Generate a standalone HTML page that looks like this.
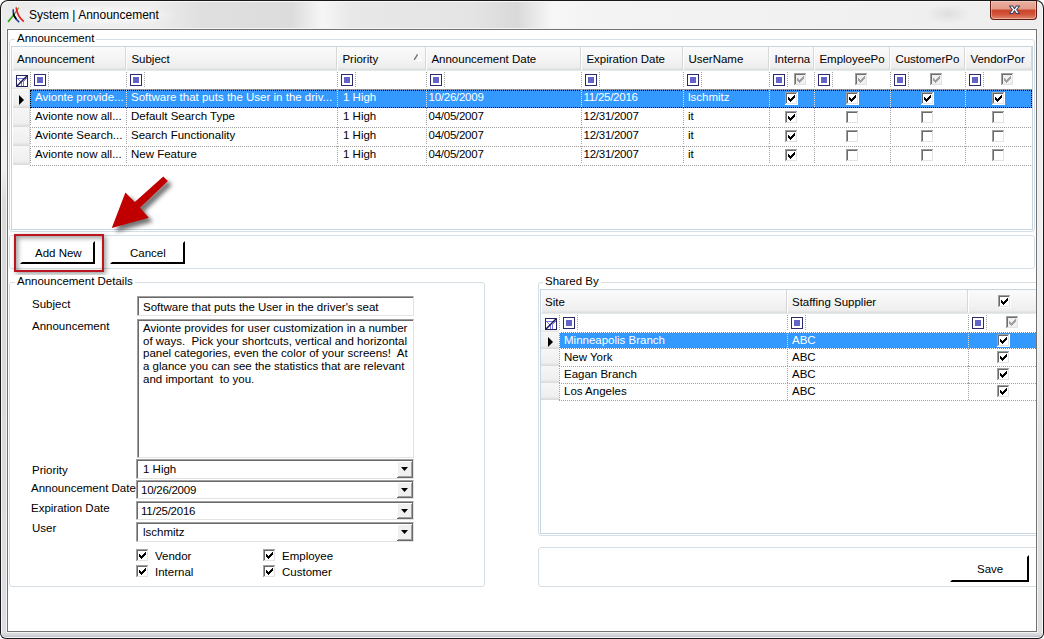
<!DOCTYPE html><html><head><meta charset="utf-8"><title>System | Announcement</title><style>
*{margin:0;padding:0;box-sizing:border-box}
html,body{width:1044px;height:639px;overflow:hidden;background:#fff}
body{position:relative;font-family:"Liberation Sans",sans-serif}
div,span,svg{position:absolute}
.t{font-size:11.5px;line-height:13px;white-space:nowrap;color:#000}
.hd{height:1px;background-image:linear-gradient(to right,#a0a0a0 50%,transparent 50%);background-size:2px 1px}
.vd{width:1px;background-image:linear-gradient(to bottom,#a0a0a0 50%,transparent 50%);background-size:1px 2px}
.fi{width:12px;height:12px;border:1px solid #2b2a6b;background:#fff}
.fi i{position:absolute;left:2px;top:2px;width:6px;height:6px;background:#6464c8}
.hc{background:linear-gradient(#fbfbfb,#f3f3f3 60%,#eeeeee 88%,#dcdcdc);border-right:1px solid #d7d7d7;box-shadow:inset 1px 0 0 #fff}
.gb{border:1px solid #d5dfe5;border-radius:3px}

.cb{border-top:1px solid #a0a0a0;border-left:1px solid #a0a0a0;border-right:1px solid #e3e3e3;border-bottom:1px solid #e3e3e3;box-shadow:inset 1px 1px 0 #696969;background:#fff}
.btn{border-right:2px solid #000;border-bottom:2px solid #000;border-top:2px solid transparent;border-left:2px solid transparent;background:#fff}
</style></head><body><div style="left:0px;top:0px;width:1044px;height:639px;background:#181818;border-radius:8px 8px 6px 6px"></div>
<div style="left:1px;top:1px;width:1042px;height:637px;background:#f8f8f8;border-radius:7px 7px 5px 5px"></div>
<div style="left:2px;top:2px;width:1040px;height:635px;background:linear-gradient(90deg,#ebebeb 0px,#eeeeee 150px,#dfdfdf 200px,#dcdcdc 290px,#f6f6f6 320px,#e8e8e8 350px,#e4e4e4 470px,#d9d9d9 515px,#f7f7f7 550px,#f3f3f3 590px,#f1f1f1 800px,#eeeeee 1040px);border-radius:6px 6px 4px 4px"></div>
<div style="left:925px;top:4px;width:45px;height:20px;background:radial-gradient(ellipse at center,rgba(0,0,0,.07),rgba(0,0,0,0) 70%)"></div>
<div style="left:2px;top:28px;width:4px;height:608px;background:linear-gradient(#ececec 0px,#f0f0f0 140px,#dadada 175px,#dadada 380px,#dcdee2 608px)"></div>
<div style="left:1038px;top:28px;width:4px;height:608px;background:linear-gradient(#eeeeee 0px,#f0f0f0 300px,#e0e0dc 420px,#dedfe0 608px)"></div>
<div style="left:2px;top:633px;width:1040px;height:4px;background:linear-gradient(#dcdce0,#d4d6da 50%,#bcc0cc);border-radius:0 0 4px 4px"></div>
<div style="left:6px;top:28px;width:1032px;height:605px;background:#f4f4f4"></div>
<div style="left:7px;top:29px;width:1030px;height:603px;background:#737373"></div>
<div style="left:8px;top:30px;width:1028px;height:601px;background:#fff"></div>
<div style="left:10px;top:4px;width:170px;height:22px;background:radial-gradient(ellipse at center,rgba(255,255,255,.9),rgba(255,255,255,0) 70%)"></div>
<svg class="a" style="left:0;top:0" width="30" height="28" viewBox="0 0 30 28"><path d="M7.3 21.2L8.8 22.6L13.6 16.2L19.2 7.9L18.6 7.2L13 14.6Z" fill="#3ca81e"/><path d="M13.2 9.2C12.8 13.5 15 18.5 19.2 22.2" stroke="#1a3596" stroke-width="1.5" fill="none"/><path d="M13.3 13.5C13.9 15.6 14.9 17.4 16.2 18.9" stroke="#000" stroke-width="1.6" fill="none"/><path d="M16.2 7.4C16.8 13 19.5 18.2 23.8 21.6" stroke="#e31b1b" stroke-width="1.6" fill="none"/></svg>
<span class="t" style="left:29px;top:8px;font-size:12px;line-height:14px;color:#000">System | Announcement</span>
<div style="left:990px;top:1px;width:47px;height:19px;border:1px solid #5d1b12;border-top:none;border-radius:0 0 4px 4px;background:linear-gradient(#eab0a2 0%,#e39a88 45%,#c9432a 50%,#d2553a 75%,#e08a72 100%);box-shadow:inset 0 0 0 1px rgba(255,220,210,.45)"></div>
<svg class="a" style="left:1004px;top:0" width="20" height="20" viewBox="1004 0 20 20"><polygon points="1009.5,6 1012.7,6 1014.5,8.7 1016.3,6 1019.5,6 1016.7,9.75 1019.5,13.5 1016.3,13.5 1014.5,10.8 1012.7,13.5 1009.5,13.5 1012.3,9.75" fill="#fff" stroke="#3c4260" stroke-width="1.1" stroke-linejoin="round"/></svg>
<div style="left:0;top:0;width:1044px;height:639px;clip-path:inset(30px 8px 8px 8px)">
<div class="gb" style="left:9px;top:39px;width:1026px;height:193px"></div>
<span class="t" style="left:15px;top:32px;padding:0 2px;background:#fff">Announcement</span>
<div style="left:11px;top:46px;width:1022px;height:184px;border:1px solid #c8d4de;background:#fff"></div>
<div class="hc" style="left:12px;top:47px;width:114px;height:23px;overflow:hidden"><span class="t" style="left:5px;top:6px">Announcement</span></div>
<div class="hc" style="left:126px;top:47px;width:211px;height:23px;overflow:hidden"><span class="t" style="left:5.4px;top:6px">Subject</span></div>
<div class="hc" style="left:337px;top:47px;width:89px;height:23px;overflow:hidden"><span class="t" style="left:5.4px;top:6px">Priority</span></div>
<div class="hc" style="left:426px;top:47px;width:155px;height:23px;overflow:hidden"><span class="t" style="left:5.4px;top:6px">Announcement Date</span></div>
<div class="hc" style="left:581px;top:47px;width:102px;height:23px;overflow:hidden"><span class="t" style="left:5.4px;top:6px">Expiration Date</span></div>
<div class="hc" style="left:683px;top:47px;width:86px;height:23px;overflow:hidden"><span class="t" style="left:5.4px;top:6px">UserName</span></div>
<div class="hc" style="left:769px;top:47px;width:45px;height:23px;overflow:hidden"><span class="t" style="left:5.4px;top:6px">Interna</span></div>
<div class="hc" style="left:814px;top:47px;width:76px;height:23px;overflow:hidden"><span class="t" style="left:5.4px;top:6px">EmployeePo</span></div>
<div class="hc" style="left:890px;top:47px;width:75px;height:23px;overflow:hidden"><span class="t" style="left:5.4px;top:6px">CustomerPo</span></div>
<div class="hc" style="left:965px;top:47px;width:67px;height:23px;overflow:hidden"><span class="t" style="left:5.4px;top:6px">VendorPor</span></div>
<div style="left:12px;top:70px;width:1020px;height:1px;background:#e2eaec"></div>
<svg class="a" style="left:412px;top:52px" width="12" height="10" viewBox="0 0 12 10"><path d="M5.5 1.5L9.5 8.5H2" stroke="#fff" fill="none" stroke-width="1.2"/><path d="M2.2 7.8L5.6 2.4" stroke="#6e6e6e" stroke-width="1.3"/></svg>
<div style="left:12px;top:71px;width:18px;height:18px;background:linear-gradient(#fdfdfd,#f6f6f6 85%,#e4e4e4)"></div>
<svg class="a" style="left:16px;top:75px" width="12" height="12" viewBox="0 0 12 12"><rect x="0" y="0" width="12" height="12" fill="#fff"/><rect x="1" y="3" width="10" height="1" fill="#7676e6"/><rect x="2" y="4" width="1" height="1" fill="#7676e6"/><rect x="3" y="5" width="1" height="1" fill="#7676e6"/><rect x="4" y="6" width="1" height="1" fill="#7676e6"/><rect x="9" y="4" width="1" height="1" fill="#7676e6"/><rect x="8" y="5" width="1" height="1" fill="#7676e6"/><rect x="7" y="6" width="1" height="1" fill="#7676e6"/><rect x="5" y="7" width="1" height="4" fill="#7676e6"/><rect x="7" y="7" width="1" height="4" fill="#7676e6"/><rect x="0.5" y="0.5" width="11" height="11" fill="none" stroke="#24235f"/><path d="M0.8 11.2L11.2 0.8" stroke="#1c1b50" stroke-width="1.5"/></svg>
<div class="vd" style="left:30px;top:72px;height:15px"></div>
<div class="vd" style="left:48px;top:72px;height:15px"></div>
<div class="fi" style="left:34px;top:74px"><i></i></div>
<div class="vd" style="left:126px;top:72px;height:15px"></div>
<div class="vd" style="left:144px;top:72px;height:15px"></div>
<div class="fi" style="left:130px;top:74px"><i></i></div>
<div class="vd" style="left:337px;top:72px;height:15px"></div>
<div class="vd" style="left:355px;top:72px;height:15px"></div>
<div class="fi" style="left:341px;top:74px"><i></i></div>
<div class="vd" style="left:426px;top:72px;height:15px"></div>
<div class="vd" style="left:444px;top:72px;height:15px"></div>
<div class="fi" style="left:430px;top:74px"><i></i></div>
<div class="vd" style="left:581px;top:72px;height:15px"></div>
<div class="vd" style="left:599px;top:72px;height:15px"></div>
<div class="fi" style="left:585px;top:74px"><i></i></div>
<div class="vd" style="left:683px;top:72px;height:15px"></div>
<div class="vd" style="left:701px;top:72px;height:15px"></div>
<div class="fi" style="left:687px;top:74px"><i></i></div>
<div class="vd" style="left:769px;top:72px;height:15px"></div>
<div class="vd" style="left:787px;top:72px;height:15px"></div>
<div class="fi" style="left:773px;top:74px"><i></i></div>
<div class="vd" style="left:814px;top:72px;height:15px"></div>
<div class="vd" style="left:832px;top:72px;height:15px"></div>
<div class="fi" style="left:818px;top:74px"><i></i></div>
<div class="vd" style="left:890px;top:72px;height:15px"></div>
<div class="vd" style="left:908px;top:72px;height:15px"></div>
<div class="fi" style="left:894px;top:74px"><i></i></div>
<div class="vd" style="left:965px;top:72px;height:15px"></div>
<div class="vd" style="left:983px;top:72px;height:15px"></div>
<div class="fi" style="left:969px;top:74px"><i></i></div>
<svg class="a" style="left:794px;top:73px" width="13" height="13" viewBox="0 0 13 13" shape-rendering="crispEdges"><rect x="0" y="0" width="13" height="13" fill="#fff"/><rect x="0" y="0" width="12" height="1" fill="#a0a0a0"/><rect x="0" y="0" width="1" height="12" fill="#a0a0a0"/><rect x="1" y="1" width="10" height="1" fill="#6e6e6e"/><rect x="1" y="1" width="1" height="10" fill="#6e6e6e"/><rect x="1" y="11" width="11" height="1" fill="#e3e3e3"/><rect x="11" y="1" width="1" height="11" fill="#e3e3e3"/><rect x="2" y="2" width="9" height="9" fill="#f0f0f0"/><rect x="9" y="3" width="1" height="1" fill="#a0a0a0"/><rect x="8" y="4" width="1" height="1" fill="#a0a0a0"/><rect x="9" y="4" width="1" height="1" fill="#a0a0a0"/><rect x="3" y="5" width="1" height="1" fill="#a0a0a0"/><rect x="7" y="5" width="1" height="1" fill="#a0a0a0"/><rect x="8" y="5" width="1" height="1" fill="#a0a0a0"/><rect x="9" y="5" width="1" height="1" fill="#a0a0a0"/><rect x="3" y="6" width="1" height="1" fill="#a0a0a0"/><rect x="4" y="6" width="1" height="1" fill="#a0a0a0"/><rect x="6" y="6" width="1" height="1" fill="#a0a0a0"/><rect x="7" y="6" width="1" height="1" fill="#a0a0a0"/><rect x="8" y="6" width="1" height="1" fill="#a0a0a0"/><rect x="3" y="7" width="1" height="1" fill="#a0a0a0"/><rect x="4" y="7" width="1" height="1" fill="#a0a0a0"/><rect x="5" y="7" width="1" height="1" fill="#a0a0a0"/><rect x="6" y="7" width="1" height="1" fill="#a0a0a0"/><rect x="7" y="7" width="1" height="1" fill="#a0a0a0"/><rect x="4" y="8" width="1" height="1" fill="#a0a0a0"/><rect x="5" y="8" width="1" height="1" fill="#a0a0a0"/><rect x="6" y="8" width="1" height="1" fill="#a0a0a0"/><rect x="5" y="9" width="1" height="1" fill="#a0a0a0"/></svg>
<svg class="a" style="left:855px;top:73px" width="13" height="13" viewBox="0 0 13 13" shape-rendering="crispEdges"><rect x="0" y="0" width="13" height="13" fill="#fff"/><rect x="0" y="0" width="12" height="1" fill="#a0a0a0"/><rect x="0" y="0" width="1" height="12" fill="#a0a0a0"/><rect x="1" y="1" width="10" height="1" fill="#6e6e6e"/><rect x="1" y="1" width="1" height="10" fill="#6e6e6e"/><rect x="1" y="11" width="11" height="1" fill="#e3e3e3"/><rect x="11" y="1" width="1" height="11" fill="#e3e3e3"/><rect x="2" y="2" width="9" height="9" fill="#f0f0f0"/><rect x="9" y="3" width="1" height="1" fill="#a0a0a0"/><rect x="8" y="4" width="1" height="1" fill="#a0a0a0"/><rect x="9" y="4" width="1" height="1" fill="#a0a0a0"/><rect x="3" y="5" width="1" height="1" fill="#a0a0a0"/><rect x="7" y="5" width="1" height="1" fill="#a0a0a0"/><rect x="8" y="5" width="1" height="1" fill="#a0a0a0"/><rect x="9" y="5" width="1" height="1" fill="#a0a0a0"/><rect x="3" y="6" width="1" height="1" fill="#a0a0a0"/><rect x="4" y="6" width="1" height="1" fill="#a0a0a0"/><rect x="6" y="6" width="1" height="1" fill="#a0a0a0"/><rect x="7" y="6" width="1" height="1" fill="#a0a0a0"/><rect x="8" y="6" width="1" height="1" fill="#a0a0a0"/><rect x="3" y="7" width="1" height="1" fill="#a0a0a0"/><rect x="4" y="7" width="1" height="1" fill="#a0a0a0"/><rect x="5" y="7" width="1" height="1" fill="#a0a0a0"/><rect x="6" y="7" width="1" height="1" fill="#a0a0a0"/><rect x="7" y="7" width="1" height="1" fill="#a0a0a0"/><rect x="4" y="8" width="1" height="1" fill="#a0a0a0"/><rect x="5" y="8" width="1" height="1" fill="#a0a0a0"/><rect x="6" y="8" width="1" height="1" fill="#a0a0a0"/><rect x="5" y="9" width="1" height="1" fill="#a0a0a0"/></svg>
<svg class="a" style="left:930px;top:73px" width="13" height="13" viewBox="0 0 13 13" shape-rendering="crispEdges"><rect x="0" y="0" width="13" height="13" fill="#fff"/><rect x="0" y="0" width="12" height="1" fill="#a0a0a0"/><rect x="0" y="0" width="1" height="12" fill="#a0a0a0"/><rect x="1" y="1" width="10" height="1" fill="#6e6e6e"/><rect x="1" y="1" width="1" height="10" fill="#6e6e6e"/><rect x="1" y="11" width="11" height="1" fill="#e3e3e3"/><rect x="11" y="1" width="1" height="11" fill="#e3e3e3"/><rect x="2" y="2" width="9" height="9" fill="#f0f0f0"/><rect x="9" y="3" width="1" height="1" fill="#a0a0a0"/><rect x="8" y="4" width="1" height="1" fill="#a0a0a0"/><rect x="9" y="4" width="1" height="1" fill="#a0a0a0"/><rect x="3" y="5" width="1" height="1" fill="#a0a0a0"/><rect x="7" y="5" width="1" height="1" fill="#a0a0a0"/><rect x="8" y="5" width="1" height="1" fill="#a0a0a0"/><rect x="9" y="5" width="1" height="1" fill="#a0a0a0"/><rect x="3" y="6" width="1" height="1" fill="#a0a0a0"/><rect x="4" y="6" width="1" height="1" fill="#a0a0a0"/><rect x="6" y="6" width="1" height="1" fill="#a0a0a0"/><rect x="7" y="6" width="1" height="1" fill="#a0a0a0"/><rect x="8" y="6" width="1" height="1" fill="#a0a0a0"/><rect x="3" y="7" width="1" height="1" fill="#a0a0a0"/><rect x="4" y="7" width="1" height="1" fill="#a0a0a0"/><rect x="5" y="7" width="1" height="1" fill="#a0a0a0"/><rect x="6" y="7" width="1" height="1" fill="#a0a0a0"/><rect x="7" y="7" width="1" height="1" fill="#a0a0a0"/><rect x="4" y="8" width="1" height="1" fill="#a0a0a0"/><rect x="5" y="8" width="1" height="1" fill="#a0a0a0"/><rect x="6" y="8" width="1" height="1" fill="#a0a0a0"/><rect x="5" y="9" width="1" height="1" fill="#a0a0a0"/></svg>
<svg class="a" style="left:1001px;top:73px" width="13" height="13" viewBox="0 0 13 13" shape-rendering="crispEdges"><rect x="0" y="0" width="13" height="13" fill="#fff"/><rect x="0" y="0" width="12" height="1" fill="#a0a0a0"/><rect x="0" y="0" width="1" height="12" fill="#a0a0a0"/><rect x="1" y="1" width="10" height="1" fill="#6e6e6e"/><rect x="1" y="1" width="1" height="10" fill="#6e6e6e"/><rect x="1" y="11" width="11" height="1" fill="#e3e3e3"/><rect x="11" y="1" width="1" height="11" fill="#e3e3e3"/><rect x="2" y="2" width="9" height="9" fill="#f0f0f0"/><rect x="9" y="3" width="1" height="1" fill="#a0a0a0"/><rect x="8" y="4" width="1" height="1" fill="#a0a0a0"/><rect x="9" y="4" width="1" height="1" fill="#a0a0a0"/><rect x="3" y="5" width="1" height="1" fill="#a0a0a0"/><rect x="7" y="5" width="1" height="1" fill="#a0a0a0"/><rect x="8" y="5" width="1" height="1" fill="#a0a0a0"/><rect x="9" y="5" width="1" height="1" fill="#a0a0a0"/><rect x="3" y="6" width="1" height="1" fill="#a0a0a0"/><rect x="4" y="6" width="1" height="1" fill="#a0a0a0"/><rect x="6" y="6" width="1" height="1" fill="#a0a0a0"/><rect x="7" y="6" width="1" height="1" fill="#a0a0a0"/><rect x="8" y="6" width="1" height="1" fill="#a0a0a0"/><rect x="3" y="7" width="1" height="1" fill="#a0a0a0"/><rect x="4" y="7" width="1" height="1" fill="#a0a0a0"/><rect x="5" y="7" width="1" height="1" fill="#a0a0a0"/><rect x="6" y="7" width="1" height="1" fill="#a0a0a0"/><rect x="7" y="7" width="1" height="1" fill="#a0a0a0"/><rect x="4" y="8" width="1" height="1" fill="#a0a0a0"/><rect x="5" y="8" width="1" height="1" fill="#a0a0a0"/><rect x="6" y="8" width="1" height="1" fill="#a0a0a0"/><rect x="5" y="9" width="1" height="1" fill="#a0a0a0"/></svg>
<div style="left:12px;top:89px;width:18px;height:19px;background:linear-gradient(#f6f6f6,#efefef 80%,#d9d9d9);box-shadow:inset 1px 0 0 #fff,inset -1px 0 0 #dedede"></div>
<div style="left:30px;top:89px;width:1002px;height:19px;background:#3399ff"></div>
<svg class="a" style="left:19px;top:95px" width="6" height="10" viewBox="0 0 6 10"><path d="M0 0L5 5L0 10Z" fill="#000"/></svg>
<div style="left:30px;top:90px;width:1002px;height:18px;border:1px dotted #000"></div>
<div class="hd" style="left:30px;top:89px;width:1002px;"></div>
<span class="t" style="left:35px;top:91px;color:#fff">Avionte provide...</span>
<span class="t" style="left:131px;top:91px;color:#fff">Software that puts the User in the driv...</span>
<span class="t" style="left:343px;top:91px;color:#fff">1 High</span>
<span class="t" style="left:428.5px;top:91px;color:#fff;letter-spacing:-0.25px">10/26/2009</span>
<span class="t" style="left:583.5px;top:91px;color:#fff;letter-spacing:-0.25px">11/25/2016</span>
<span class="t" style="left:688px;top:91px;color:#fff">lschmitz</span>
<svg class="a" style="left:785px;top:92px" width="13" height="13" viewBox="0 0 13 13" shape-rendering="crispEdges"><rect x="0" y="0" width="13" height="13" fill="#fff"/><rect x="0" y="0" width="12" height="1" fill="#a0a0a0"/><rect x="0" y="0" width="1" height="12" fill="#a0a0a0"/><rect x="1" y="1" width="10" height="1" fill="#696969"/><rect x="1" y="1" width="1" height="10" fill="#696969"/><rect x="1" y="11" width="11" height="1" fill="#e3e3e3"/><rect x="11" y="1" width="1" height="11" fill="#e3e3e3"/><rect x="9" y="3" width="1" height="1" fill="#000"/><rect x="8" y="4" width="1" height="1" fill="#000"/><rect x="9" y="4" width="1" height="1" fill="#000"/><rect x="3" y="5" width="1" height="1" fill="#000"/><rect x="7" y="5" width="1" height="1" fill="#000"/><rect x="8" y="5" width="1" height="1" fill="#000"/><rect x="9" y="5" width="1" height="1" fill="#000"/><rect x="3" y="6" width="1" height="1" fill="#000"/><rect x="4" y="6" width="1" height="1" fill="#000"/><rect x="6" y="6" width="1" height="1" fill="#000"/><rect x="7" y="6" width="1" height="1" fill="#000"/><rect x="8" y="6" width="1" height="1" fill="#000"/><rect x="3" y="7" width="1" height="1" fill="#000"/><rect x="4" y="7" width="1" height="1" fill="#000"/><rect x="5" y="7" width="1" height="1" fill="#000"/><rect x="6" y="7" width="1" height="1" fill="#000"/><rect x="7" y="7" width="1" height="1" fill="#000"/><rect x="4" y="8" width="1" height="1" fill="#000"/><rect x="5" y="8" width="1" height="1" fill="#000"/><rect x="6" y="8" width="1" height="1" fill="#000"/><rect x="5" y="9" width="1" height="1" fill="#000"/></svg>
<svg class="a" style="left:846px;top:92px" width="13" height="13" viewBox="0 0 13 13" shape-rendering="crispEdges"><rect x="0" y="0" width="13" height="13" fill="#fff"/><rect x="0" y="0" width="12" height="1" fill="#a0a0a0"/><rect x="0" y="0" width="1" height="12" fill="#a0a0a0"/><rect x="1" y="1" width="10" height="1" fill="#696969"/><rect x="1" y="1" width="1" height="10" fill="#696969"/><rect x="1" y="11" width="11" height="1" fill="#e3e3e3"/><rect x="11" y="1" width="1" height="11" fill="#e3e3e3"/><rect x="9" y="3" width="1" height="1" fill="#000"/><rect x="8" y="4" width="1" height="1" fill="#000"/><rect x="9" y="4" width="1" height="1" fill="#000"/><rect x="3" y="5" width="1" height="1" fill="#000"/><rect x="7" y="5" width="1" height="1" fill="#000"/><rect x="8" y="5" width="1" height="1" fill="#000"/><rect x="9" y="5" width="1" height="1" fill="#000"/><rect x="3" y="6" width="1" height="1" fill="#000"/><rect x="4" y="6" width="1" height="1" fill="#000"/><rect x="6" y="6" width="1" height="1" fill="#000"/><rect x="7" y="6" width="1" height="1" fill="#000"/><rect x="8" y="6" width="1" height="1" fill="#000"/><rect x="3" y="7" width="1" height="1" fill="#000"/><rect x="4" y="7" width="1" height="1" fill="#000"/><rect x="5" y="7" width="1" height="1" fill="#000"/><rect x="6" y="7" width="1" height="1" fill="#000"/><rect x="7" y="7" width="1" height="1" fill="#000"/><rect x="4" y="8" width="1" height="1" fill="#000"/><rect x="5" y="8" width="1" height="1" fill="#000"/><rect x="6" y="8" width="1" height="1" fill="#000"/><rect x="5" y="9" width="1" height="1" fill="#000"/></svg>
<svg class="a" style="left:921px;top:92px" width="13" height="13" viewBox="0 0 13 13" shape-rendering="crispEdges"><rect x="0" y="0" width="13" height="13" fill="#fff"/><rect x="0" y="0" width="12" height="1" fill="#a0a0a0"/><rect x="0" y="0" width="1" height="12" fill="#a0a0a0"/><rect x="1" y="1" width="10" height="1" fill="#696969"/><rect x="1" y="1" width="1" height="10" fill="#696969"/><rect x="1" y="11" width="11" height="1" fill="#e3e3e3"/><rect x="11" y="1" width="1" height="11" fill="#e3e3e3"/><rect x="9" y="3" width="1" height="1" fill="#000"/><rect x="8" y="4" width="1" height="1" fill="#000"/><rect x="9" y="4" width="1" height="1" fill="#000"/><rect x="3" y="5" width="1" height="1" fill="#000"/><rect x="7" y="5" width="1" height="1" fill="#000"/><rect x="8" y="5" width="1" height="1" fill="#000"/><rect x="9" y="5" width="1" height="1" fill="#000"/><rect x="3" y="6" width="1" height="1" fill="#000"/><rect x="4" y="6" width="1" height="1" fill="#000"/><rect x="6" y="6" width="1" height="1" fill="#000"/><rect x="7" y="6" width="1" height="1" fill="#000"/><rect x="8" y="6" width="1" height="1" fill="#000"/><rect x="3" y="7" width="1" height="1" fill="#000"/><rect x="4" y="7" width="1" height="1" fill="#000"/><rect x="5" y="7" width="1" height="1" fill="#000"/><rect x="6" y="7" width="1" height="1" fill="#000"/><rect x="7" y="7" width="1" height="1" fill="#000"/><rect x="4" y="8" width="1" height="1" fill="#000"/><rect x="5" y="8" width="1" height="1" fill="#000"/><rect x="6" y="8" width="1" height="1" fill="#000"/><rect x="5" y="9" width="1" height="1" fill="#000"/></svg>
<svg class="a" style="left:992px;top:92px" width="13" height="13" viewBox="0 0 13 13" shape-rendering="crispEdges"><rect x="0" y="0" width="13" height="13" fill="#fff"/><rect x="0" y="0" width="12" height="1" fill="#a0a0a0"/><rect x="0" y="0" width="1" height="12" fill="#a0a0a0"/><rect x="1" y="1" width="10" height="1" fill="#696969"/><rect x="1" y="1" width="1" height="10" fill="#696969"/><rect x="1" y="11" width="11" height="1" fill="#e3e3e3"/><rect x="11" y="1" width="1" height="11" fill="#e3e3e3"/><rect x="9" y="3" width="1" height="1" fill="#000"/><rect x="8" y="4" width="1" height="1" fill="#000"/><rect x="9" y="4" width="1" height="1" fill="#000"/><rect x="3" y="5" width="1" height="1" fill="#000"/><rect x="7" y="5" width="1" height="1" fill="#000"/><rect x="8" y="5" width="1" height="1" fill="#000"/><rect x="9" y="5" width="1" height="1" fill="#000"/><rect x="3" y="6" width="1" height="1" fill="#000"/><rect x="4" y="6" width="1" height="1" fill="#000"/><rect x="6" y="6" width="1" height="1" fill="#000"/><rect x="7" y="6" width="1" height="1" fill="#000"/><rect x="8" y="6" width="1" height="1" fill="#000"/><rect x="3" y="7" width="1" height="1" fill="#000"/><rect x="4" y="7" width="1" height="1" fill="#000"/><rect x="5" y="7" width="1" height="1" fill="#000"/><rect x="6" y="7" width="1" height="1" fill="#000"/><rect x="7" y="7" width="1" height="1" fill="#000"/><rect x="4" y="8" width="1" height="1" fill="#000"/><rect x="5" y="8" width="1" height="1" fill="#000"/><rect x="6" y="8" width="1" height="1" fill="#000"/><rect x="5" y="9" width="1" height="1" fill="#000"/></svg>
<div style="left:12px;top:108px;width:18px;height:19px;background:linear-gradient(#f6f6f6,#efefef 80%,#d9d9d9);box-shadow:inset 1px 0 0 #fff,inset -1px 0 0 #dedede"></div>
<div class="hd" style="left:30px;top:127px;width:1002px;"></div>
<div class="vd" style="left:126px;top:108px;height:18px"></div>
<div class="vd" style="left:337px;top:108px;height:18px"></div>
<div class="vd" style="left:426px;top:108px;height:18px"></div>
<div class="vd" style="left:581px;top:108px;height:18px"></div>
<div class="vd" style="left:683px;top:108px;height:18px"></div>
<div class="vd" style="left:769px;top:108px;height:18px"></div>
<div class="vd" style="left:814px;top:108px;height:18px"></div>
<div class="vd" style="left:890px;top:108px;height:18px"></div>
<div class="vd" style="left:965px;top:108px;height:18px"></div>
<div class="vd" style="left:30px;top:108px;height:18px"></div>
<span class="t" style="left:35px;top:110px;color:#000">Avionte now all...</span>
<span class="t" style="left:131px;top:110px;color:#000">Default Search Type</span>
<span class="t" style="left:343px;top:110px;color:#000">1 High</span>
<span class="t" style="left:428.5px;top:110px;color:#000;letter-spacing:-0.25px">04/05/2007</span>
<span class="t" style="left:583.5px;top:110px;color:#000;letter-spacing:-0.25px">12/31/2007</span>
<span class="t" style="left:688px;top:110px;color:#000">it</span>
<svg class="a" style="left:785px;top:111px" width="13" height="13" viewBox="0 0 13 13" shape-rendering="crispEdges"><rect x="0" y="0" width="13" height="13" fill="#fff"/><rect x="0" y="0" width="12" height="1" fill="#a0a0a0"/><rect x="0" y="0" width="1" height="12" fill="#a0a0a0"/><rect x="1" y="1" width="10" height="1" fill="#696969"/><rect x="1" y="1" width="1" height="10" fill="#696969"/><rect x="1" y="11" width="11" height="1" fill="#e3e3e3"/><rect x="11" y="1" width="1" height="11" fill="#e3e3e3"/><rect x="9" y="3" width="1" height="1" fill="#000"/><rect x="8" y="4" width="1" height="1" fill="#000"/><rect x="9" y="4" width="1" height="1" fill="#000"/><rect x="3" y="5" width="1" height="1" fill="#000"/><rect x="7" y="5" width="1" height="1" fill="#000"/><rect x="8" y="5" width="1" height="1" fill="#000"/><rect x="9" y="5" width="1" height="1" fill="#000"/><rect x="3" y="6" width="1" height="1" fill="#000"/><rect x="4" y="6" width="1" height="1" fill="#000"/><rect x="6" y="6" width="1" height="1" fill="#000"/><rect x="7" y="6" width="1" height="1" fill="#000"/><rect x="8" y="6" width="1" height="1" fill="#000"/><rect x="3" y="7" width="1" height="1" fill="#000"/><rect x="4" y="7" width="1" height="1" fill="#000"/><rect x="5" y="7" width="1" height="1" fill="#000"/><rect x="6" y="7" width="1" height="1" fill="#000"/><rect x="7" y="7" width="1" height="1" fill="#000"/><rect x="4" y="8" width="1" height="1" fill="#000"/><rect x="5" y="8" width="1" height="1" fill="#000"/><rect x="6" y="8" width="1" height="1" fill="#000"/><rect x="5" y="9" width="1" height="1" fill="#000"/></svg>
<svg class="a" style="left:846px;top:111px" width="13" height="13" viewBox="0 0 13 13" shape-rendering="crispEdges"><rect x="0" y="0" width="13" height="13" fill="#fff"/><rect x="0" y="0" width="12" height="1" fill="#a0a0a0"/><rect x="0" y="0" width="1" height="12" fill="#a0a0a0"/><rect x="1" y="1" width="10" height="1" fill="#696969"/><rect x="1" y="1" width="1" height="10" fill="#696969"/><rect x="1" y="11" width="11" height="1" fill="#e3e3e3"/><rect x="11" y="1" width="1" height="11" fill="#e3e3e3"/></svg>
<svg class="a" style="left:921px;top:111px" width="13" height="13" viewBox="0 0 13 13" shape-rendering="crispEdges"><rect x="0" y="0" width="13" height="13" fill="#fff"/><rect x="0" y="0" width="12" height="1" fill="#a0a0a0"/><rect x="0" y="0" width="1" height="12" fill="#a0a0a0"/><rect x="1" y="1" width="10" height="1" fill="#696969"/><rect x="1" y="1" width="1" height="10" fill="#696969"/><rect x="1" y="11" width="11" height="1" fill="#e3e3e3"/><rect x="11" y="1" width="1" height="11" fill="#e3e3e3"/></svg>
<svg class="a" style="left:992px;top:111px" width="13" height="13" viewBox="0 0 13 13" shape-rendering="crispEdges"><rect x="0" y="0" width="13" height="13" fill="#fff"/><rect x="0" y="0" width="12" height="1" fill="#a0a0a0"/><rect x="0" y="0" width="1" height="12" fill="#a0a0a0"/><rect x="1" y="1" width="10" height="1" fill="#696969"/><rect x="1" y="1" width="1" height="10" fill="#696969"/><rect x="1" y="11" width="11" height="1" fill="#e3e3e3"/><rect x="11" y="1" width="1" height="11" fill="#e3e3e3"/></svg>
<div style="left:12px;top:127px;width:18px;height:19px;background:linear-gradient(#f6f6f6,#efefef 80%,#d9d9d9);box-shadow:inset 1px 0 0 #fff,inset -1px 0 0 #dedede"></div>
<div class="hd" style="left:30px;top:146px;width:1002px;"></div>
<div class="vd" style="left:126px;top:127px;height:18px"></div>
<div class="vd" style="left:337px;top:127px;height:18px"></div>
<div class="vd" style="left:426px;top:127px;height:18px"></div>
<div class="vd" style="left:581px;top:127px;height:18px"></div>
<div class="vd" style="left:683px;top:127px;height:18px"></div>
<div class="vd" style="left:769px;top:127px;height:18px"></div>
<div class="vd" style="left:814px;top:127px;height:18px"></div>
<div class="vd" style="left:890px;top:127px;height:18px"></div>
<div class="vd" style="left:965px;top:127px;height:18px"></div>
<div class="vd" style="left:30px;top:127px;height:18px"></div>
<span class="t" style="left:35px;top:129px;color:#000">Avionte Search...</span>
<span class="t" style="left:131px;top:129px;color:#000">Search Functionality</span>
<span class="t" style="left:343px;top:129px;color:#000">1 High</span>
<span class="t" style="left:428.5px;top:129px;color:#000;letter-spacing:-0.25px">04/05/2007</span>
<span class="t" style="left:583.5px;top:129px;color:#000;letter-spacing:-0.25px">12/31/2007</span>
<span class="t" style="left:688px;top:129px;color:#000">it</span>
<svg class="a" style="left:785px;top:130px" width="13" height="13" viewBox="0 0 13 13" shape-rendering="crispEdges"><rect x="0" y="0" width="13" height="13" fill="#fff"/><rect x="0" y="0" width="12" height="1" fill="#a0a0a0"/><rect x="0" y="0" width="1" height="12" fill="#a0a0a0"/><rect x="1" y="1" width="10" height="1" fill="#696969"/><rect x="1" y="1" width="1" height="10" fill="#696969"/><rect x="1" y="11" width="11" height="1" fill="#e3e3e3"/><rect x="11" y="1" width="1" height="11" fill="#e3e3e3"/><rect x="9" y="3" width="1" height="1" fill="#000"/><rect x="8" y="4" width="1" height="1" fill="#000"/><rect x="9" y="4" width="1" height="1" fill="#000"/><rect x="3" y="5" width="1" height="1" fill="#000"/><rect x="7" y="5" width="1" height="1" fill="#000"/><rect x="8" y="5" width="1" height="1" fill="#000"/><rect x="9" y="5" width="1" height="1" fill="#000"/><rect x="3" y="6" width="1" height="1" fill="#000"/><rect x="4" y="6" width="1" height="1" fill="#000"/><rect x="6" y="6" width="1" height="1" fill="#000"/><rect x="7" y="6" width="1" height="1" fill="#000"/><rect x="8" y="6" width="1" height="1" fill="#000"/><rect x="3" y="7" width="1" height="1" fill="#000"/><rect x="4" y="7" width="1" height="1" fill="#000"/><rect x="5" y="7" width="1" height="1" fill="#000"/><rect x="6" y="7" width="1" height="1" fill="#000"/><rect x="7" y="7" width="1" height="1" fill="#000"/><rect x="4" y="8" width="1" height="1" fill="#000"/><rect x="5" y="8" width="1" height="1" fill="#000"/><rect x="6" y="8" width="1" height="1" fill="#000"/><rect x="5" y="9" width="1" height="1" fill="#000"/></svg>
<svg class="a" style="left:846px;top:130px" width="13" height="13" viewBox="0 0 13 13" shape-rendering="crispEdges"><rect x="0" y="0" width="13" height="13" fill="#fff"/><rect x="0" y="0" width="12" height="1" fill="#a0a0a0"/><rect x="0" y="0" width="1" height="12" fill="#a0a0a0"/><rect x="1" y="1" width="10" height="1" fill="#696969"/><rect x="1" y="1" width="1" height="10" fill="#696969"/><rect x="1" y="11" width="11" height="1" fill="#e3e3e3"/><rect x="11" y="1" width="1" height="11" fill="#e3e3e3"/></svg>
<svg class="a" style="left:921px;top:130px" width="13" height="13" viewBox="0 0 13 13" shape-rendering="crispEdges"><rect x="0" y="0" width="13" height="13" fill="#fff"/><rect x="0" y="0" width="12" height="1" fill="#a0a0a0"/><rect x="0" y="0" width="1" height="12" fill="#a0a0a0"/><rect x="1" y="1" width="10" height="1" fill="#696969"/><rect x="1" y="1" width="1" height="10" fill="#696969"/><rect x="1" y="11" width="11" height="1" fill="#e3e3e3"/><rect x="11" y="1" width="1" height="11" fill="#e3e3e3"/></svg>
<svg class="a" style="left:992px;top:130px" width="13" height="13" viewBox="0 0 13 13" shape-rendering="crispEdges"><rect x="0" y="0" width="13" height="13" fill="#fff"/><rect x="0" y="0" width="12" height="1" fill="#a0a0a0"/><rect x="0" y="0" width="1" height="12" fill="#a0a0a0"/><rect x="1" y="1" width="10" height="1" fill="#696969"/><rect x="1" y="1" width="1" height="10" fill="#696969"/><rect x="1" y="11" width="11" height="1" fill="#e3e3e3"/><rect x="11" y="1" width="1" height="11" fill="#e3e3e3"/></svg>
<div style="left:12px;top:146px;width:18px;height:19px;background:linear-gradient(#f6f6f6,#efefef 80%,#d9d9d9);box-shadow:inset 1px 0 0 #fff,inset -1px 0 0 #dedede"></div>
<div class="hd" style="left:30px;top:165px;width:1002px;"></div>
<div class="vd" style="left:126px;top:146px;height:18px"></div>
<div class="vd" style="left:337px;top:146px;height:18px"></div>
<div class="vd" style="left:426px;top:146px;height:18px"></div>
<div class="vd" style="left:581px;top:146px;height:18px"></div>
<div class="vd" style="left:683px;top:146px;height:18px"></div>
<div class="vd" style="left:769px;top:146px;height:18px"></div>
<div class="vd" style="left:814px;top:146px;height:18px"></div>
<div class="vd" style="left:890px;top:146px;height:18px"></div>
<div class="vd" style="left:965px;top:146px;height:18px"></div>
<div class="vd" style="left:30px;top:146px;height:18px"></div>
<span class="t" style="left:35px;top:148px;color:#000">Avionte now all...</span>
<span class="t" style="left:131px;top:148px;color:#000">New Feature</span>
<span class="t" style="left:343px;top:148px;color:#000">1 High</span>
<span class="t" style="left:428.5px;top:148px;color:#000;letter-spacing:-0.25px">04/05/2007</span>
<span class="t" style="left:583.5px;top:148px;color:#000;letter-spacing:-0.25px">12/31/2007</span>
<span class="t" style="left:688px;top:148px;color:#000">it</span>
<svg class="a" style="left:785px;top:149px" width="13" height="13" viewBox="0 0 13 13" shape-rendering="crispEdges"><rect x="0" y="0" width="13" height="13" fill="#fff"/><rect x="0" y="0" width="12" height="1" fill="#a0a0a0"/><rect x="0" y="0" width="1" height="12" fill="#a0a0a0"/><rect x="1" y="1" width="10" height="1" fill="#696969"/><rect x="1" y="1" width="1" height="10" fill="#696969"/><rect x="1" y="11" width="11" height="1" fill="#e3e3e3"/><rect x="11" y="1" width="1" height="11" fill="#e3e3e3"/><rect x="9" y="3" width="1" height="1" fill="#000"/><rect x="8" y="4" width="1" height="1" fill="#000"/><rect x="9" y="4" width="1" height="1" fill="#000"/><rect x="3" y="5" width="1" height="1" fill="#000"/><rect x="7" y="5" width="1" height="1" fill="#000"/><rect x="8" y="5" width="1" height="1" fill="#000"/><rect x="9" y="5" width="1" height="1" fill="#000"/><rect x="3" y="6" width="1" height="1" fill="#000"/><rect x="4" y="6" width="1" height="1" fill="#000"/><rect x="6" y="6" width="1" height="1" fill="#000"/><rect x="7" y="6" width="1" height="1" fill="#000"/><rect x="8" y="6" width="1" height="1" fill="#000"/><rect x="3" y="7" width="1" height="1" fill="#000"/><rect x="4" y="7" width="1" height="1" fill="#000"/><rect x="5" y="7" width="1" height="1" fill="#000"/><rect x="6" y="7" width="1" height="1" fill="#000"/><rect x="7" y="7" width="1" height="1" fill="#000"/><rect x="4" y="8" width="1" height="1" fill="#000"/><rect x="5" y="8" width="1" height="1" fill="#000"/><rect x="6" y="8" width="1" height="1" fill="#000"/><rect x="5" y="9" width="1" height="1" fill="#000"/></svg>
<svg class="a" style="left:846px;top:149px" width="13" height="13" viewBox="0 0 13 13" shape-rendering="crispEdges"><rect x="0" y="0" width="13" height="13" fill="#fff"/><rect x="0" y="0" width="12" height="1" fill="#a0a0a0"/><rect x="0" y="0" width="1" height="12" fill="#a0a0a0"/><rect x="1" y="1" width="10" height="1" fill="#696969"/><rect x="1" y="1" width="1" height="10" fill="#696969"/><rect x="1" y="11" width="11" height="1" fill="#e3e3e3"/><rect x="11" y="1" width="1" height="11" fill="#e3e3e3"/></svg>
<svg class="a" style="left:921px;top:149px" width="13" height="13" viewBox="0 0 13 13" shape-rendering="crispEdges"><rect x="0" y="0" width="13" height="13" fill="#fff"/><rect x="0" y="0" width="12" height="1" fill="#a0a0a0"/><rect x="0" y="0" width="1" height="12" fill="#a0a0a0"/><rect x="1" y="1" width="10" height="1" fill="#696969"/><rect x="1" y="1" width="1" height="10" fill="#696969"/><rect x="1" y="11" width="11" height="1" fill="#e3e3e3"/><rect x="11" y="1" width="1" height="11" fill="#e3e3e3"/></svg>
<svg class="a" style="left:992px;top:149px" width="13" height="13" viewBox="0 0 13 13" shape-rendering="crispEdges"><rect x="0" y="0" width="13" height="13" fill="#fff"/><rect x="0" y="0" width="12" height="1" fill="#a0a0a0"/><rect x="0" y="0" width="1" height="12" fill="#a0a0a0"/><rect x="1" y="1" width="10" height="1" fill="#696969"/><rect x="1" y="1" width="1" height="10" fill="#696969"/><rect x="1" y="11" width="11" height="1" fill="#e3e3e3"/><rect x="11" y="1" width="1" height="11" fill="#e3e3e3"/></svg>
<div class="vd" style="left:126px;top:90px;height:17px;background-image:linear-gradient(to bottom,#e6ddd0 50%,transparent 50%)"></div>
<div class="vd" style="left:337px;top:90px;height:17px;background-image:linear-gradient(to bottom,#e6ddd0 50%,transparent 50%)"></div>
<div class="vd" style="left:426px;top:90px;height:17px;background-image:linear-gradient(to bottom,#e6ddd0 50%,transparent 50%)"></div>
<div class="vd" style="left:581px;top:90px;height:17px;background-image:linear-gradient(to bottom,#e6ddd0 50%,transparent 50%)"></div>
<div class="vd" style="left:683px;top:90px;height:17px;background-image:linear-gradient(to bottom,#e6ddd0 50%,transparent 50%)"></div>
<div class="vd" style="left:769px;top:90px;height:17px;background-image:linear-gradient(to bottom,#e6ddd0 50%,transparent 50%)"></div>
<div class="vd" style="left:814px;top:90px;height:17px;background-image:linear-gradient(to bottom,#e6ddd0 50%,transparent 50%)"></div>
<div class="vd" style="left:890px;top:90px;height:17px;background-image:linear-gradient(to bottom,#e6ddd0 50%,transparent 50%)"></div>
<div class="vd" style="left:965px;top:90px;height:17px;background-image:linear-gradient(to bottom,#e6ddd0 50%,transparent 50%)"></div>
<div class="gb" style="left:9px;top:235px;width:1026px;height:34px"></div>
<div class="btn" style="left:20px;top:241px;width:75px;height:23px"></div>
<span class="t" style="left:35px;top:247px;">Add New</span>
<div class="btn" style="left:110px;top:241px;width:75px;height:23px"></div>
<span class="t" style="left:130px;top:247px;">Cancel</span>
<div style="left:14px;top:234px;width:90px;height:38px;border:2px solid #bd1520;box-shadow:2px 2px 5px rgba(0,0,0,.4),inset 2px 2px 5px rgba(0,0,0,.4)"></div>
<svg class="a" style="left:100px;top:170px;overflow:visible" width="80" height="70" viewBox="100 170 80 70"><defs><filter id="sh" x="-50%" y="-50%" width="200%" height="200%"><feGaussianBlur stdDeviation="2"/></filter></defs><polygon transform="translate(4,4)" points="111.8,227.9 125.4,192.5 134.8,202 163.3,176.4 167.9,181 140,207.8 148.8,217.7" fill="rgba(0,0,0,.55)" filter="url(#sh)"/><polygon points="111.8,227.9 125.4,192.5 134.8,202 163.3,176.4 167.9,181 140,207.8 148.8,217.7" fill="#c00000"/></svg>
<div class="gb" style="left:9px;top:282px;width:476px;height:305px"></div>
<span class="t" style="left:15px;top:275px;padding:0 2px;background:#fff">Announcement Details</span>
<span class="t" style="left:32px;top:298px;">Subject</span>
<span class="t" style="left:32px;top:320px;">Announcement</span>
<span class="t" style="left:32px;top:464px;">Priority</span>
<span class="t" style="left:31px;top:482px;">Announcement Date</span>
<span class="t" style="left:31px;top:502px;">Expiration Date</span>
<span class="t" style="left:32px;top:522px;">User</span>
<div class="cb" style="left:137px;top:296px;width:277px;height:20px"></div>
<span class="t" style="left:143px;top:301px;">Software that puts the User in the driver's seat</span>
<div class="cb" style="left:137px;top:319px;width:277px;height:139px"></div>
<span class="t" style="left:143px;top:322px;">Avionte provides for user customization in a number</span>
<span class="t" style="left:143px;top:335px;">of ways.&nbsp; Pick your shortcuts, vertical and horizontal</span>
<span class="t" style="left:143px;top:347px;">panel categories, even the color of your screens!&nbsp; At</span>
<span class="t" style="left:143px;top:360px;">a glance you can see the statistics that are relevant</span>
<span class="t" style="left:143px;top:373px;">and important&nbsp; to you.</span>
<div class="cb" style="left:136px;top:459px;width:278px;height:20px"></div>
<div style="left:397px;top:461px;width:16px;height:17px;background:#f0f0f0;border-right:1px solid #696969;border-bottom:1px solid #696969;box-shadow:inset 1px 1px 0 #fff,inset -1px -1px 0 #a0a0a0"></div>
<svg class="a" style="left:401px;top:467px" width="7" height="4" viewBox="0 0 7 4"><path d="M0 0H7L3.5 4Z" fill="#000"/></svg>
<span class="t" style="left:143px;top:463px;">1 High</span>
<div class="cb" style="left:136px;top:480px;width:278px;height:19px"></div>
<div style="left:397px;top:482px;width:16px;height:16px;background:#f0f0f0;border-right:1px solid #696969;border-bottom:1px solid #696969;box-shadow:inset 1px 1px 0 #fff,inset -1px -1px 0 #a0a0a0"></div>
<svg class="a" style="left:401px;top:488px" width="7" height="4" viewBox="0 0 7 4"><path d="M0 0H7L3.5 4Z" fill="#000"/></svg>
<span class="t" style="left:141px;top:484px;;letter-spacing:-0.25px">10/26/2009</span>
<div class="cb" style="left:136px;top:501px;width:278px;height:19px"></div>
<div style="left:397px;top:503px;width:16px;height:16px;background:#f0f0f0;border-right:1px solid #696969;border-bottom:1px solid #696969;box-shadow:inset 1px 1px 0 #fff,inset -1px -1px 0 #a0a0a0"></div>
<svg class="a" style="left:401px;top:509px" width="7" height="4" viewBox="0 0 7 4"><path d="M0 0H7L3.5 4Z" fill="#000"/></svg>
<span class="t" style="left:141px;top:505px;;letter-spacing:-0.25px">11/25/2016</span>
<div class="cb" style="left:136px;top:522px;width:278px;height:20px"></div>
<div style="left:397px;top:524px;width:16px;height:17px;background:#f0f0f0;border-right:1px solid #696969;border-bottom:1px solid #696969;box-shadow:inset 1px 1px 0 #fff,inset -1px -1px 0 #a0a0a0"></div>
<svg class="a" style="left:401px;top:530px" width="7" height="4" viewBox="0 0 7 4"><path d="M0 0H7L3.5 4Z" fill="#000"/></svg>
<span class="t" style="left:143px;top:526px;">lschmitz</span>
<svg class="a" style="left:136px;top:549px" width="13" height="13" viewBox="0 0 13 13" shape-rendering="crispEdges"><rect x="0" y="0" width="13" height="13" fill="#fff"/><rect x="0" y="0" width="12" height="1" fill="#a0a0a0"/><rect x="0" y="0" width="1" height="12" fill="#a0a0a0"/><rect x="1" y="1" width="10" height="1" fill="#696969"/><rect x="1" y="1" width="1" height="10" fill="#696969"/><rect x="1" y="11" width="11" height="1" fill="#e3e3e3"/><rect x="11" y="1" width="1" height="11" fill="#e3e3e3"/><rect x="9" y="3" width="1" height="1" fill="#000"/><rect x="8" y="4" width="1" height="1" fill="#000"/><rect x="9" y="4" width="1" height="1" fill="#000"/><rect x="3" y="5" width="1" height="1" fill="#000"/><rect x="7" y="5" width="1" height="1" fill="#000"/><rect x="8" y="5" width="1" height="1" fill="#000"/><rect x="9" y="5" width="1" height="1" fill="#000"/><rect x="3" y="6" width="1" height="1" fill="#000"/><rect x="4" y="6" width="1" height="1" fill="#000"/><rect x="6" y="6" width="1" height="1" fill="#000"/><rect x="7" y="6" width="1" height="1" fill="#000"/><rect x="8" y="6" width="1" height="1" fill="#000"/><rect x="3" y="7" width="1" height="1" fill="#000"/><rect x="4" y="7" width="1" height="1" fill="#000"/><rect x="5" y="7" width="1" height="1" fill="#000"/><rect x="6" y="7" width="1" height="1" fill="#000"/><rect x="7" y="7" width="1" height="1" fill="#000"/><rect x="4" y="8" width="1" height="1" fill="#000"/><rect x="5" y="8" width="1" height="1" fill="#000"/><rect x="6" y="8" width="1" height="1" fill="#000"/><rect x="5" y="9" width="1" height="1" fill="#000"/></svg>
<span class="t" style="left:155px;top:550px;">Vendor</span>
<svg class="a" style="left:136px;top:565px" width="13" height="13" viewBox="0 0 13 13" shape-rendering="crispEdges"><rect x="0" y="0" width="13" height="13" fill="#fff"/><rect x="0" y="0" width="12" height="1" fill="#a0a0a0"/><rect x="0" y="0" width="1" height="12" fill="#a0a0a0"/><rect x="1" y="1" width="10" height="1" fill="#696969"/><rect x="1" y="1" width="1" height="10" fill="#696969"/><rect x="1" y="11" width="11" height="1" fill="#e3e3e3"/><rect x="11" y="1" width="1" height="11" fill="#e3e3e3"/><rect x="9" y="3" width="1" height="1" fill="#000"/><rect x="8" y="4" width="1" height="1" fill="#000"/><rect x="9" y="4" width="1" height="1" fill="#000"/><rect x="3" y="5" width="1" height="1" fill="#000"/><rect x="7" y="5" width="1" height="1" fill="#000"/><rect x="8" y="5" width="1" height="1" fill="#000"/><rect x="9" y="5" width="1" height="1" fill="#000"/><rect x="3" y="6" width="1" height="1" fill="#000"/><rect x="4" y="6" width="1" height="1" fill="#000"/><rect x="6" y="6" width="1" height="1" fill="#000"/><rect x="7" y="6" width="1" height="1" fill="#000"/><rect x="8" y="6" width="1" height="1" fill="#000"/><rect x="3" y="7" width="1" height="1" fill="#000"/><rect x="4" y="7" width="1" height="1" fill="#000"/><rect x="5" y="7" width="1" height="1" fill="#000"/><rect x="6" y="7" width="1" height="1" fill="#000"/><rect x="7" y="7" width="1" height="1" fill="#000"/><rect x="4" y="8" width="1" height="1" fill="#000"/><rect x="5" y="8" width="1" height="1" fill="#000"/><rect x="6" y="8" width="1" height="1" fill="#000"/><rect x="5" y="9" width="1" height="1" fill="#000"/></svg>
<span class="t" style="left:155px;top:566px;">Internal</span>
<svg class="a" style="left:263px;top:549px" width="13" height="13" viewBox="0 0 13 13" shape-rendering="crispEdges"><rect x="0" y="0" width="13" height="13" fill="#fff"/><rect x="0" y="0" width="12" height="1" fill="#a0a0a0"/><rect x="0" y="0" width="1" height="12" fill="#a0a0a0"/><rect x="1" y="1" width="10" height="1" fill="#696969"/><rect x="1" y="1" width="1" height="10" fill="#696969"/><rect x="1" y="11" width="11" height="1" fill="#e3e3e3"/><rect x="11" y="1" width="1" height="11" fill="#e3e3e3"/><rect x="9" y="3" width="1" height="1" fill="#000"/><rect x="8" y="4" width="1" height="1" fill="#000"/><rect x="9" y="4" width="1" height="1" fill="#000"/><rect x="3" y="5" width="1" height="1" fill="#000"/><rect x="7" y="5" width="1" height="1" fill="#000"/><rect x="8" y="5" width="1" height="1" fill="#000"/><rect x="9" y="5" width="1" height="1" fill="#000"/><rect x="3" y="6" width="1" height="1" fill="#000"/><rect x="4" y="6" width="1" height="1" fill="#000"/><rect x="6" y="6" width="1" height="1" fill="#000"/><rect x="7" y="6" width="1" height="1" fill="#000"/><rect x="8" y="6" width="1" height="1" fill="#000"/><rect x="3" y="7" width="1" height="1" fill="#000"/><rect x="4" y="7" width="1" height="1" fill="#000"/><rect x="5" y="7" width="1" height="1" fill="#000"/><rect x="6" y="7" width="1" height="1" fill="#000"/><rect x="7" y="7" width="1" height="1" fill="#000"/><rect x="4" y="8" width="1" height="1" fill="#000"/><rect x="5" y="8" width="1" height="1" fill="#000"/><rect x="6" y="8" width="1" height="1" fill="#000"/><rect x="5" y="9" width="1" height="1" fill="#000"/></svg>
<span class="t" style="left:282px;top:550px;">Employee</span>
<svg class="a" style="left:263px;top:565px" width="13" height="13" viewBox="0 0 13 13" shape-rendering="crispEdges"><rect x="0" y="0" width="13" height="13" fill="#fff"/><rect x="0" y="0" width="12" height="1" fill="#a0a0a0"/><rect x="0" y="0" width="1" height="12" fill="#a0a0a0"/><rect x="1" y="1" width="10" height="1" fill="#696969"/><rect x="1" y="1" width="1" height="10" fill="#696969"/><rect x="1" y="11" width="11" height="1" fill="#e3e3e3"/><rect x="11" y="1" width="1" height="11" fill="#e3e3e3"/><rect x="9" y="3" width="1" height="1" fill="#000"/><rect x="8" y="4" width="1" height="1" fill="#000"/><rect x="9" y="4" width="1" height="1" fill="#000"/><rect x="3" y="5" width="1" height="1" fill="#000"/><rect x="7" y="5" width="1" height="1" fill="#000"/><rect x="8" y="5" width="1" height="1" fill="#000"/><rect x="9" y="5" width="1" height="1" fill="#000"/><rect x="3" y="6" width="1" height="1" fill="#000"/><rect x="4" y="6" width="1" height="1" fill="#000"/><rect x="6" y="6" width="1" height="1" fill="#000"/><rect x="7" y="6" width="1" height="1" fill="#000"/><rect x="8" y="6" width="1" height="1" fill="#000"/><rect x="3" y="7" width="1" height="1" fill="#000"/><rect x="4" y="7" width="1" height="1" fill="#000"/><rect x="5" y="7" width="1" height="1" fill="#000"/><rect x="6" y="7" width="1" height="1" fill="#000"/><rect x="7" y="7" width="1" height="1" fill="#000"/><rect x="4" y="8" width="1" height="1" fill="#000"/><rect x="5" y="8" width="1" height="1" fill="#000"/><rect x="6" y="8" width="1" height="1" fill="#000"/><rect x="5" y="9" width="1" height="1" fill="#000"/></svg>
<span class="t" style="left:282px;top:566px;">Customer</span>
<div class="gb" style="left:538px;top:282px;width:520px;height:254px"></div>
<span class="t" style="left:543px;top:275px;padding:0 2px;background:#fff">Shared By</span>
<div style="left:540px;top:289px;width:520px;height:245px;border:1px solid #c8d4de;background:#fff"></div>
<div class="hc" style="left:541px;top:290px;width:246px;height:23px;overflow:hidden"><span class="t" style="left:4px;top:6px">Site</span></div>
<div class="hc" style="left:787px;top:290px;width:181px;height:23px;overflow:hidden"><span class="t" style="left:5px;top:6px">Staffing Supplier</span></div>
<div class="hc" style="left:968px;top:290px;width:92px;height:23px;overflow:hidden"><span class="t" style="left:5px;top:6px"></span></div>
<div style="left:541px;top:313px;width:500px;height:1px;background:#e2eaec"></div>
<svg class="a" style="left:998px;top:295px" width="13" height="13" viewBox="0 0 13 13" shape-rendering="crispEdges"><rect x="0" y="0" width="13" height="13" fill="#fff"/><rect x="0" y="0" width="12" height="1" fill="#a0a0a0"/><rect x="0" y="0" width="1" height="12" fill="#a0a0a0"/><rect x="1" y="1" width="10" height="1" fill="#696969"/><rect x="1" y="1" width="1" height="10" fill="#696969"/><rect x="1" y="11" width="11" height="1" fill="#e3e3e3"/><rect x="11" y="1" width="1" height="11" fill="#e3e3e3"/><rect x="9" y="3" width="1" height="1" fill="#000"/><rect x="8" y="4" width="1" height="1" fill="#000"/><rect x="9" y="4" width="1" height="1" fill="#000"/><rect x="3" y="5" width="1" height="1" fill="#000"/><rect x="7" y="5" width="1" height="1" fill="#000"/><rect x="8" y="5" width="1" height="1" fill="#000"/><rect x="9" y="5" width="1" height="1" fill="#000"/><rect x="3" y="6" width="1" height="1" fill="#000"/><rect x="4" y="6" width="1" height="1" fill="#000"/><rect x="6" y="6" width="1" height="1" fill="#000"/><rect x="7" y="6" width="1" height="1" fill="#000"/><rect x="8" y="6" width="1" height="1" fill="#000"/><rect x="3" y="7" width="1" height="1" fill="#000"/><rect x="4" y="7" width="1" height="1" fill="#000"/><rect x="5" y="7" width="1" height="1" fill="#000"/><rect x="6" y="7" width="1" height="1" fill="#000"/><rect x="7" y="7" width="1" height="1" fill="#000"/><rect x="4" y="8" width="1" height="1" fill="#000"/><rect x="5" y="8" width="1" height="1" fill="#000"/><rect x="6" y="8" width="1" height="1" fill="#000"/><rect x="5" y="9" width="1" height="1" fill="#000"/></svg>
<div style="left:541px;top:314px;width:18px;height:18px;background:linear-gradient(#fdfdfd,#f6f6f6 85%,#e4e4e4)"></div>
<svg class="a" style="left:545px;top:318px" width="12" height="12" viewBox="0 0 12 12"><rect x="0" y="0" width="12" height="12" fill="#fff"/><rect x="1" y="3" width="10" height="1" fill="#7676e6"/><rect x="2" y="4" width="1" height="1" fill="#7676e6"/><rect x="3" y="5" width="1" height="1" fill="#7676e6"/><rect x="4" y="6" width="1" height="1" fill="#7676e6"/><rect x="9" y="4" width="1" height="1" fill="#7676e6"/><rect x="8" y="5" width="1" height="1" fill="#7676e6"/><rect x="7" y="6" width="1" height="1" fill="#7676e6"/><rect x="5" y="7" width="1" height="4" fill="#7676e6"/><rect x="7" y="7" width="1" height="4" fill="#7676e6"/><rect x="0.5" y="0.5" width="11" height="11" fill="none" stroke="#24235f"/><path d="M0.8 11.2L11.2 0.8" stroke="#1c1b50" stroke-width="1.5"/></svg>
<div class="vd" style="left:559px;top:315px;height:15px"></div>
<div class="vd" style="left:577px;top:315px;height:15px"></div>
<div class="fi" style="left:563px;top:317px"><i></i></div>
<div class="vd" style="left:787px;top:315px;height:15px"></div>
<div class="vd" style="left:805px;top:315px;height:15px"></div>
<div class="fi" style="left:791px;top:317px"><i></i></div>
<div class="vd" style="left:968px;top:315px;height:15px"></div>
<div class="vd" style="left:986px;top:315px;height:15px"></div>
<div class="fi" style="left:972px;top:317px"><i></i></div>
<svg class="a" style="left:1006px;top:316px" width="13" height="13" viewBox="0 0 13 13" shape-rendering="crispEdges"><rect x="0" y="0" width="13" height="13" fill="#fff"/><rect x="0" y="0" width="12" height="1" fill="#a0a0a0"/><rect x="0" y="0" width="1" height="12" fill="#a0a0a0"/><rect x="1" y="1" width="10" height="1" fill="#6e6e6e"/><rect x="1" y="1" width="1" height="10" fill="#6e6e6e"/><rect x="1" y="11" width="11" height="1" fill="#e3e3e3"/><rect x="11" y="1" width="1" height="11" fill="#e3e3e3"/><rect x="2" y="2" width="9" height="9" fill="#f0f0f0"/><rect x="9" y="3" width="1" height="1" fill="#a0a0a0"/><rect x="8" y="4" width="1" height="1" fill="#a0a0a0"/><rect x="9" y="4" width="1" height="1" fill="#a0a0a0"/><rect x="3" y="5" width="1" height="1" fill="#a0a0a0"/><rect x="7" y="5" width="1" height="1" fill="#a0a0a0"/><rect x="8" y="5" width="1" height="1" fill="#a0a0a0"/><rect x="9" y="5" width="1" height="1" fill="#a0a0a0"/><rect x="3" y="6" width="1" height="1" fill="#a0a0a0"/><rect x="4" y="6" width="1" height="1" fill="#a0a0a0"/><rect x="6" y="6" width="1" height="1" fill="#a0a0a0"/><rect x="7" y="6" width="1" height="1" fill="#a0a0a0"/><rect x="8" y="6" width="1" height="1" fill="#a0a0a0"/><rect x="3" y="7" width="1" height="1" fill="#a0a0a0"/><rect x="4" y="7" width="1" height="1" fill="#a0a0a0"/><rect x="5" y="7" width="1" height="1" fill="#a0a0a0"/><rect x="6" y="7" width="1" height="1" fill="#a0a0a0"/><rect x="7" y="7" width="1" height="1" fill="#a0a0a0"/><rect x="4" y="8" width="1" height="1" fill="#a0a0a0"/><rect x="5" y="8" width="1" height="1" fill="#a0a0a0"/><rect x="6" y="8" width="1" height="1" fill="#a0a0a0"/><rect x="5" y="9" width="1" height="1" fill="#a0a0a0"/></svg>
<div style="left:541px;top:332px;width:18px;height:17px;background:linear-gradient(#f6f6f6,#efefef 80%,#d9d9d9)"></div>
<div style="left:559px;top:332px;width:500px;height:17px;background:#3399ff"></div>
<div style="left:559px;top:332px;width:500px;height:17px;border:1px dotted #fff"></div>
<svg class="a" style="left:548px;top:337px" width="6" height="10" viewBox="0 0 6 10"><path d="M0 0L5 5L0 10Z" fill="#000"/></svg>
<div class="vd" style="left:787px;top:332px;height:17px;background-image:linear-gradient(to bottom,#e6ddd0 50%,transparent 50%)"></div>
<div class="vd" style="left:968px;top:332px;height:17px;background-image:linear-gradient(to bottom,#e6ddd0 50%,transparent 50%)"></div>
<span class="t" style="left:564px;top:334px;color:#fff">Minneapolis Branch</span>
<span class="t" style="left:792px;top:334px;color:#fff">ABC</span>
<svg class="a" style="left:997px;top:334px" width="13" height="13" viewBox="0 0 13 13" shape-rendering="crispEdges"><rect x="0" y="0" width="13" height="13" fill="#fff"/><rect x="0" y="0" width="12" height="1" fill="#a0a0a0"/><rect x="0" y="0" width="1" height="12" fill="#a0a0a0"/><rect x="1" y="1" width="10" height="1" fill="#696969"/><rect x="1" y="1" width="1" height="10" fill="#696969"/><rect x="1" y="11" width="11" height="1" fill="#e3e3e3"/><rect x="11" y="1" width="1" height="11" fill="#e3e3e3"/><rect x="9" y="3" width="1" height="1" fill="#000"/><rect x="8" y="4" width="1" height="1" fill="#000"/><rect x="9" y="4" width="1" height="1" fill="#000"/><rect x="3" y="5" width="1" height="1" fill="#000"/><rect x="7" y="5" width="1" height="1" fill="#000"/><rect x="8" y="5" width="1" height="1" fill="#000"/><rect x="9" y="5" width="1" height="1" fill="#000"/><rect x="3" y="6" width="1" height="1" fill="#000"/><rect x="4" y="6" width="1" height="1" fill="#000"/><rect x="6" y="6" width="1" height="1" fill="#000"/><rect x="7" y="6" width="1" height="1" fill="#000"/><rect x="8" y="6" width="1" height="1" fill="#000"/><rect x="3" y="7" width="1" height="1" fill="#000"/><rect x="4" y="7" width="1" height="1" fill="#000"/><rect x="5" y="7" width="1" height="1" fill="#000"/><rect x="6" y="7" width="1" height="1" fill="#000"/><rect x="7" y="7" width="1" height="1" fill="#000"/><rect x="4" y="8" width="1" height="1" fill="#000"/><rect x="5" y="8" width="1" height="1" fill="#000"/><rect x="6" y="8" width="1" height="1" fill="#000"/><rect x="5" y="9" width="1" height="1" fill="#000"/></svg>
<div style="left:541px;top:349px;width:18px;height:17px;background:linear-gradient(#f6f6f6,#efefef 80%,#d9d9d9)"></div>
<div class="hd" style="left:559px;top:366px;width:482px;"></div>
<div class="vd" style="left:559px;top:349px;height:17px"></div>
<div class="vd" style="left:787px;top:349px;height:17px"></div>
<div class="vd" style="left:968px;top:349px;height:17px"></div>
<span class="t" style="left:564px;top:351px;color:#000">New York</span>
<span class="t" style="left:792px;top:351px;color:#000">ABC</span>
<svg class="a" style="left:997px;top:351px" width="13" height="13" viewBox="0 0 13 13" shape-rendering="crispEdges"><rect x="0" y="0" width="13" height="13" fill="#fff"/><rect x="0" y="0" width="12" height="1" fill="#a0a0a0"/><rect x="0" y="0" width="1" height="12" fill="#a0a0a0"/><rect x="1" y="1" width="10" height="1" fill="#696969"/><rect x="1" y="1" width="1" height="10" fill="#696969"/><rect x="1" y="11" width="11" height="1" fill="#e3e3e3"/><rect x="11" y="1" width="1" height="11" fill="#e3e3e3"/><rect x="9" y="3" width="1" height="1" fill="#000"/><rect x="8" y="4" width="1" height="1" fill="#000"/><rect x="9" y="4" width="1" height="1" fill="#000"/><rect x="3" y="5" width="1" height="1" fill="#000"/><rect x="7" y="5" width="1" height="1" fill="#000"/><rect x="8" y="5" width="1" height="1" fill="#000"/><rect x="9" y="5" width="1" height="1" fill="#000"/><rect x="3" y="6" width="1" height="1" fill="#000"/><rect x="4" y="6" width="1" height="1" fill="#000"/><rect x="6" y="6" width="1" height="1" fill="#000"/><rect x="7" y="6" width="1" height="1" fill="#000"/><rect x="8" y="6" width="1" height="1" fill="#000"/><rect x="3" y="7" width="1" height="1" fill="#000"/><rect x="4" y="7" width="1" height="1" fill="#000"/><rect x="5" y="7" width="1" height="1" fill="#000"/><rect x="6" y="7" width="1" height="1" fill="#000"/><rect x="7" y="7" width="1" height="1" fill="#000"/><rect x="4" y="8" width="1" height="1" fill="#000"/><rect x="5" y="8" width="1" height="1" fill="#000"/><rect x="6" y="8" width="1" height="1" fill="#000"/><rect x="5" y="9" width="1" height="1" fill="#000"/></svg>
<div style="left:541px;top:366px;width:18px;height:17px;background:linear-gradient(#f6f6f6,#efefef 80%,#d9d9d9)"></div>
<div class="hd" style="left:559px;top:383px;width:482px;"></div>
<div class="vd" style="left:559px;top:366px;height:17px"></div>
<div class="vd" style="left:787px;top:366px;height:17px"></div>
<div class="vd" style="left:968px;top:366px;height:17px"></div>
<span class="t" style="left:564px;top:368px;color:#000">Eagan Branch</span>
<span class="t" style="left:792px;top:368px;color:#000">ABC</span>
<svg class="a" style="left:997px;top:368px" width="13" height="13" viewBox="0 0 13 13" shape-rendering="crispEdges"><rect x="0" y="0" width="13" height="13" fill="#fff"/><rect x="0" y="0" width="12" height="1" fill="#a0a0a0"/><rect x="0" y="0" width="1" height="12" fill="#a0a0a0"/><rect x="1" y="1" width="10" height="1" fill="#696969"/><rect x="1" y="1" width="1" height="10" fill="#696969"/><rect x="1" y="11" width="11" height="1" fill="#e3e3e3"/><rect x="11" y="1" width="1" height="11" fill="#e3e3e3"/><rect x="9" y="3" width="1" height="1" fill="#000"/><rect x="8" y="4" width="1" height="1" fill="#000"/><rect x="9" y="4" width="1" height="1" fill="#000"/><rect x="3" y="5" width="1" height="1" fill="#000"/><rect x="7" y="5" width="1" height="1" fill="#000"/><rect x="8" y="5" width="1" height="1" fill="#000"/><rect x="9" y="5" width="1" height="1" fill="#000"/><rect x="3" y="6" width="1" height="1" fill="#000"/><rect x="4" y="6" width="1" height="1" fill="#000"/><rect x="6" y="6" width="1" height="1" fill="#000"/><rect x="7" y="6" width="1" height="1" fill="#000"/><rect x="8" y="6" width="1" height="1" fill="#000"/><rect x="3" y="7" width="1" height="1" fill="#000"/><rect x="4" y="7" width="1" height="1" fill="#000"/><rect x="5" y="7" width="1" height="1" fill="#000"/><rect x="6" y="7" width="1" height="1" fill="#000"/><rect x="7" y="7" width="1" height="1" fill="#000"/><rect x="4" y="8" width="1" height="1" fill="#000"/><rect x="5" y="8" width="1" height="1" fill="#000"/><rect x="6" y="8" width="1" height="1" fill="#000"/><rect x="5" y="9" width="1" height="1" fill="#000"/></svg>
<div style="left:541px;top:383px;width:18px;height:17px;background:linear-gradient(#f6f6f6,#efefef 80%,#d9d9d9)"></div>
<div class="hd" style="left:559px;top:400px;width:482px;"></div>
<div class="vd" style="left:559px;top:383px;height:17px"></div>
<div class="vd" style="left:787px;top:383px;height:17px"></div>
<div class="vd" style="left:968px;top:383px;height:17px"></div>
<span class="t" style="left:564px;top:385px;color:#000">Los Angeles</span>
<span class="t" style="left:792px;top:385px;color:#000">ABC</span>
<svg class="a" style="left:997px;top:385px" width="13" height="13" viewBox="0 0 13 13" shape-rendering="crispEdges"><rect x="0" y="0" width="13" height="13" fill="#fff"/><rect x="0" y="0" width="12" height="1" fill="#a0a0a0"/><rect x="0" y="0" width="1" height="12" fill="#a0a0a0"/><rect x="1" y="1" width="10" height="1" fill="#696969"/><rect x="1" y="1" width="1" height="10" fill="#696969"/><rect x="1" y="11" width="11" height="1" fill="#e3e3e3"/><rect x="11" y="1" width="1" height="11" fill="#e3e3e3"/><rect x="9" y="3" width="1" height="1" fill="#000"/><rect x="8" y="4" width="1" height="1" fill="#000"/><rect x="9" y="4" width="1" height="1" fill="#000"/><rect x="3" y="5" width="1" height="1" fill="#000"/><rect x="7" y="5" width="1" height="1" fill="#000"/><rect x="8" y="5" width="1" height="1" fill="#000"/><rect x="9" y="5" width="1" height="1" fill="#000"/><rect x="3" y="6" width="1" height="1" fill="#000"/><rect x="4" y="6" width="1" height="1" fill="#000"/><rect x="6" y="6" width="1" height="1" fill="#000"/><rect x="7" y="6" width="1" height="1" fill="#000"/><rect x="8" y="6" width="1" height="1" fill="#000"/><rect x="3" y="7" width="1" height="1" fill="#000"/><rect x="4" y="7" width="1" height="1" fill="#000"/><rect x="5" y="7" width="1" height="1" fill="#000"/><rect x="6" y="7" width="1" height="1" fill="#000"/><rect x="7" y="7" width="1" height="1" fill="#000"/><rect x="4" y="8" width="1" height="1" fill="#000"/><rect x="5" y="8" width="1" height="1" fill="#000"/><rect x="6" y="8" width="1" height="1" fill="#000"/><rect x="5" y="9" width="1" height="1" fill="#000"/></svg>
<div class="gb" style="left:538px;top:547px;width:520px;height:40px"></div>
<div class="btn" style="left:950px;top:555px;width:79px;height:27px"></div>
<span class="t" style="left:977px;top:563px;">Save</span>
</div></body></html>
